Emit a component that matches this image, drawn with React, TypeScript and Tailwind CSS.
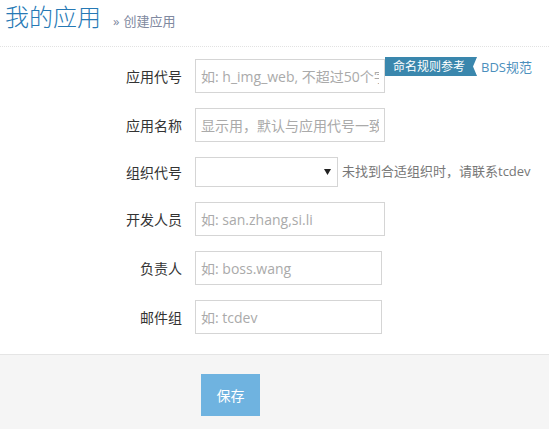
import React from 'react';

const font = "font-['Open_Sans','Noto_Sans_CJK_SC',sans-serif]";

const inputCls =
  'h-[34px] border border-[#d5d5d5] bg-white px-[5px] text-[14px] text-[#333] outline-none placeholder:text-[#aaa]';

function Row({ label, children }: { label: string; children: React.ReactNode }) {
  return (
    <div className="flex items-start">
      <label className="flex h-[34px] w-[182px] shrink-0 items-center justify-end text-[14px] text-[#333]">
        {label}
      </label>
      <div className="ml-[13px] flex items-start">{children}</div>
    </div>
  );
}

export default function App() {
  return (
    <div className={`${font} min-h-[429px] w-[549px] bg-white`}>
      {/* Page header */}
      <div className="flex h-[47px] items-baseline border-b border-dotted border-[#e2e2e2] pl-[5px] pt-[3px]">
        <h1 className="text-[24px] font-light leading-[28px] text-[#2679b5]">我的应用</h1>
        <small className="ml-[12px] text-[13px] text-[#8089a0]">
          <span className="mr-[4px]">»</span>创建应用
        </small>
      </div>

      {/* Form */}
      <form className="mt-[12px] flex flex-col gap-[15px]">
        <Row label="应用代号">
          <input className={`${inputCls} w-[190px]`} placeholder="如: h_img_web, 不超过50个字符" />
          <span className="-mt-[2px] flex h-[19px] items-center bg-[#3a87ad] pl-[8px] pr-[12px] text-[12px] text-white [clip-path:polygon(0_0,100%_0,calc(100%-4px)_50%,100%_100%,0_100%)]">
            命名规则参考
          </span>
          <a className="-mt-[3px] ml-[4px] text-[13px] leading-[22px] text-[#4c8fbd]">BDS规范</a>
        </Row>
        <Row label="应用名称">
          <input className={`${inputCls} w-[190px]`} placeholder="显示用，默认与应用代号一致" />
        </Row>
        <div className="flex items-center">
          <label className="w-[182px] shrink-0 text-right text-[14px] text-[#333]">组织代号</label>
          <div className="ml-[13px] flex items-center">
            <div className="flex h-[30px] w-[143px] items-center justify-end border border-[#d5d5d5] bg-white pr-[6px]">
              <svg width="7" height="6" viewBox="0 0 7 6">
                <path d="M0 0 H7 L3.5 6 Z" fill="#222" />
              </svg>
            </div>
            <span className="ml-[4px] text-[13px] text-[#777]">未找到合适组织时，请联系tcdev</span>
          </div>
        </div>
        <Row label="开发人员">
          <input className={`${inputCls} w-[190px]`} placeholder="如: san.zhang,si.li" />
        </Row>
        <Row label="负责人">
          <input className={`${inputCls} w-[187px]`} placeholder="如: boss.wang" />
        </Row>
        <Row label="邮件组">
          <input className={`${inputCls} w-[187px]`} placeholder="如: tcdev" />
        </Row>
      </form>

      {/* Actions */}
      <div className="mt-[20px] h-[75px] border-t border-[#e5e5e5] bg-[#f5f5f5] pl-[201px] pt-[19px]">
        <button className="h-[42px] w-[59px] bg-[#6fb3e0] text-[14px] text-white">保存</button>
      </div>
    </div>
  );
}
